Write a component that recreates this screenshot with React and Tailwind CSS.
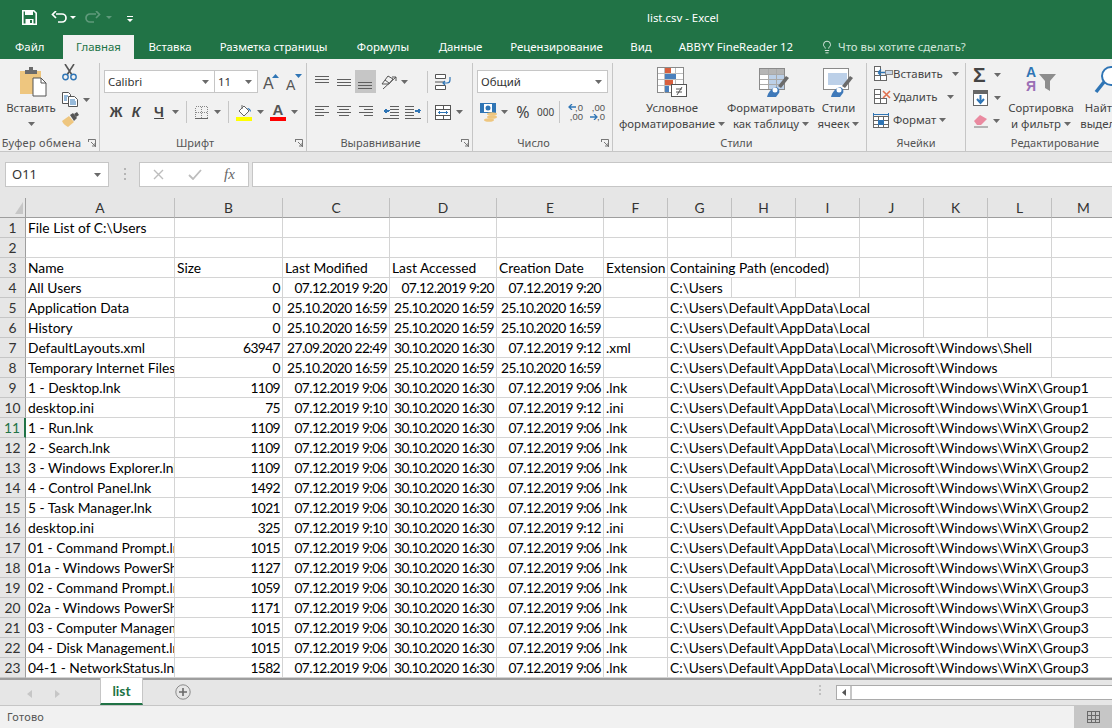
import { Lightbulb } from "lucide-react"

const UI = "[font-family:'Noto_Sans',sans-serif]"
const CELL = "[font-family:Lato,sans-serif]"

const P = "C:\\Users\\Default\\AppData\\Local"
const W = P + "\\Microsoft\\Windows"
const X = W + "\\WinX\\Group"
const cols = ["A", "B", "C", "D", "E", "F", "G", "H", "I", "J", "K", "L", "M"]
const spanClass = { 1: "col-span-1", 3: "col-span-3", 4: "col-span-4", 6: "col-span-6", 7: "col-span-7" }

const m = "07.12.2019 9:06"
const a = "30.10.2020 16:30"
const z = "25.10.2020 16:59"

// name, size, modified, accessed, created, ext, path, how many columns the path runs over
const rows = [
  ["All Users", "0", "07.12.2019 9:20", "07.12.2019 9:20", "07.12.2019 9:20", "", "C:\\Users", 1],
  ["Application Data", "0", z, z, z, "", P, 4],
  ["History", "0", z, z, z, "", P, 4],
  ["DefaultLayouts.xml", "63947", "27.09.2020 22:49", a, "07.12.2019 9:12", ".xml", W + "\\Shell", 6],
  ["Temporary Internet Files", "0", z, z, z, "", W, 6],
  ["1 - Desktop.lnk", "1109", m, a, m, ".lnk", X + "1", 7],
  ["desktop.ini", "75", "07.12.2019 9:10", a, "07.12.2019 9:12", ".ini", X + "1", 7],
  ["1 - Run.lnk", "1109", m, a, m, ".lnk", X + "2", 7],
  ["2 - Search.lnk", "1109", m, a, m, ".lnk", X + "2", 7],
  ["3 - Windows Explorer.lnk", "1109", m, a, m, ".lnk", X + "2", 7],
  ["4 - Control Panel.lnk", "1492", m, a, m, ".lnk", X + "2", 7],
  ["5 - Task Manager.lnk", "1021", m, a, m, ".lnk", X + "2", 7],
  ["desktop.ini", "325", "07.12.2019 9:10", a, "07.12.2019 9:12", ".ini", X + "2", 7],
  ["01 - Command Prompt.lnk", "1015", m, a, m, ".lnk", X + "3", 7],
  ["01a - Windows PowerShell.lnk", "1127", m, a, m, ".lnk", X + "3", 7],
  ["02 - Command Prompt.lnk", "1059", m, a, m, ".lnk", X + "3", 7],
  ["02a - Windows PowerShell.lnk", "1171", m, a, m, ".lnk", X + "3", 7],
  ["03 - Computer Management.lnk", "1015", m, a, m, ".lnk", X + "3", 7],
  ["04 - Disk Management.lnk", "1015", m, a, m, ".lnk", X + "3", 7],
  ["04-1 - NetworkStatus.lnk", "1582", m, a, m, ".lnk", X + "3", 7],
]

const GRID = "grid grid-cols-[26px_149px_108px_107px_107px_107px_64px_64px_64px_64px_64px_64px_64px_64px] w-[1116px]"

const Caret = ({ className = "" }) => (
  <svg width="7" height="4" className={`shrink-0 ${className}`}><path d="M0 0h7L3.5 4z" fill="#6a6a6a" /></svg>
)

const Lines = ({ w = 15, h = 14, items, color = "#5f5f5f" }) => (
  <svg width={w} height={h}>
    {items.map(([x, y, l, c], i) => <rect key={i} x={x} y={y} width={l} height="1" fill={c || color} />)}
  </svg>
)

const Launcher = () => (
  <svg width="8" height="8" className="absolute right-[3px] top-[3px]">
    <path d="M0 .5h7.5V8M.5 0v3M3 3l4 4M4 7h3V4" fill="none" stroke="#777" strokeWidth="1" />
  </svg>
)

const Group = ({ width, label, launcher, children, border = true }) => (
  <div className={`${width} shrink-0 flex flex-col ${border ? "border-r border-[#c6c6c6]" : ""}`}>
    <div className="h-[73px] flex">{children}</div>
    <div className="relative h-[11px] leading-[14px] text-center text-[11px] text-[#555] whitespace-nowrap">
      {label}
      {launcher && <Launcher />}
    </div>
  </div>
)

const Divider = ({ className = "" }) => <div className={`w-px h-[22px] bg-[#c6c6c6] ${className}`} />

const PasteIcon = () => (
  <svg width="29" height="30" className="ml-[4px]">
    <path d="M1 4h21v23H1z" fill="#eec67f" />
    <path d="M6 3h4V0h4v3h4v4H6z" fill="#6b6b6b" />
    <path d="M14 11h8l5 5v13H14z" fill="#fff" stroke="#555" />
    <path d="M22 11v5h5" fill="none" stroke="#555" />
  </svg>
)

const Scissors = () => (
  <svg width="15" height="17">
    <path d="M3 0l7 11M12 0L5 11" stroke="#555" strokeWidth="1.6" fill="none" />
    <circle cx="3.5" cy="13" r="2.7" fill="none" stroke="#2f75b5" strokeWidth="1.4" />
    <circle cx="11.5" cy="13" r="2.7" fill="none" stroke="#2f75b5" strokeWidth="1.4" />
  </svg>
)

const CopyIcon = () => (
  <svg width="16" height="15">
    <path d="M.5.5h6l2 2v9h-8z" fill="#fff" stroke="#555" />
    <path d="M6.5 4.5h6l3 3v7h-9z" fill="#fff" stroke="#555" />
    <path d="M2 4h4M2 6h3M2 8h3M8 8h5M8 10h6M8 12h6" stroke="#2f75b5" />
  </svg>
)

const Brush = () => (
  <svg width="18" height="15">
    <path d="M0 9l7-5 5 6-6 5C4 14 1 12 0 9z" fill="#eec67f" />
    <path d="M8 3l3-2 4 5-3 3z" fill="#555" />
    <path d="M12 2l3-2 2 3-3 2z" fill="#555" />
  </svg>
)

const BigA = ({ small, up }) => (
  <div className="relative w-[16px] h-[20px]">
    <span className={`absolute left-0 bottom-0 leading-none text-[#555] [font-family:'Liberation_Sans',sans-serif] ${small ? "text-[14px]" : "text-[16px]"}`}>A</span>
    <svg width="7" height="4" className="absolute right-0 top-[2px]">
      <path d={up ? "M0 4h7L3.5 0z" : "M0 0h7L3.5 4z"} fill="#2f75b5" />
    </svg>
  </div>
)

const Borders = () => (
  <svg width="13" height="13" shapeRendering="crispEdges">
    <path d="M.5.5h12v12H.5zM6.5.5v12M.5 6.5h12" fill="none" stroke="#888" strokeDasharray="1 1" />
    <path d="M0 12.5h13" stroke="#666" />
  </svg>
)

const FillColor = () => (
  <svg width="17" height="17">
    <path d="M3 7l5-5 5 5-5 5z" fill="#fff" stroke="#666" />
    <path d="M6 5V1" stroke="#666" />
    <path d="M11 4c3 0 4 2 4 4z" fill="#2f75b5" />
    <rect y="13" width="16" height="4" fill="#ffff00" />
  </svg>
)

const FontColor = () => (
  <div className="relative w-[16px] h-[18px] flex flex-col items-center">
    <span className="leading-[14px] text-[15px] text-[#555] [font-family:'Liberation_Sans',sans-serif]">A</span>
    <div className="w-[16px] h-[4px] bg-[#ff0000]" />
  </div>
)

const Orientation = () => (
  <svg width="18" height="16">
    <path d="M1 10l6-8 5 3-4 5zM4 6l4 3" fill="none" stroke="#555" />
    <path d="M2 15L15 3M11 3h4v4" fill="none" stroke="#555" />
  </svg>
)

const Wrap = () => (
  <svg width="16" height="16">
    <path d="M.5.5h10v4H.5zM.5 11.5h10v4H.5z" fill="#fff" stroke="#555" />
    <path d="M0 8h9" stroke="#555" />
    <path d="M15 3v3c0 2-1 3-3 3H8M10 7L8 9l2 2" fill="none" stroke="#2f75b5" strokeWidth="1.2" />
  </svg>
)

const Merge = () => (
  <svg width="16" height="15" shapeRendering="crispEdges">
    <path d="M.5.5h15v14H.5zM.5 4.5h15M.5 10.5h15M8 .5v4M8 10.5v4" fill="#fff" stroke="#555" />
    <path d="M3 7.5h10" stroke="#2f75b5" />
    <path d="M3 7.5l2-2v4zM13 7.5l-2-2v4z" fill="#2f75b5" />
  </svg>
)

const Currency = () => (
  <svg width="18" height="19">
    <rect x=".5" y=".5" width="15" height="9" fill="#fff" stroke="#2f75b5" />
    <path d="M0 0h4v10H0zM12 0h4v10h-4z" fill="#2f75b5" />
    <circle cx="8" cy="5" r="2.5" fill="#2f75b5" />
    <ellipse cx="12" cy="11" rx="5" ry="1.8" fill="#eec67f" />
    <ellipse cx="12" cy="14" rx="5" ry="1.8" fill="#eec67f" />
    <ellipse cx="9" cy="17" rx="5" ry="1.8" fill="#eec67f" />
  </svg>
)

const Decimal = ({ more }) => (
  <div className="relative w-[15px] h-[18px] text-[9.5px] leading-[9px] text-[#555] [font-family:'Liberation_Sans',sans-serif]">
    <div className="text-right">{more ? ",00" : ",0"}</div>
    <div className="text-right">{more ? ",0" : ",00"}</div>
    <svg width="8" height="6" className={`absolute left-0 ${more ? "top-[11px]" : "top-[1px]"}`}>
      <path d={more ? "M0 3h7M4 0l3 3-3 3" : "M8 3H1M4 0L1 3l3 3"} fill="none" stroke="#2f75b5" strokeWidth="1.3" />
    </svg>
  </div>
)

const CondFormat = () => (
  <svg width="30" height="30" shapeRendering="crispEdges" className="mb-[3px]">
    <path d="M.5.5h26v25H.5z" fill="#fff" stroke="#8a8a8a" />
    <path d="M7.5 1v25M18.5 1v25M25 1M1 6.5h25M1 12.5h25M1 18.5h25" stroke="#bdbdbd" />
    <rect x="8" y="1" width="6" height="5" fill="#d8603f" />
    <rect x="8" y="7" width="11" height="5" fill="#4a80bd" />
    <rect x="8" y="13" width="8" height="5" fill="#d8603f" />
    <rect x="8" y="19" width="4" height="6" fill="#4a80bd" />
    <rect x="14.5" y="17.5" width="15" height="12" fill="#fff" stroke="#555" />
    <path d="M19 22h6M19 25h6M25 20l-5 8" fill="none" stroke="#555" shapeRendering="auto" />
  </svg>
)

const TableStyle = ({ cell }) => (
  <svg width="31" height="29" className={`mb-[3px] ${cell ? "" : "ml-[7px]"}`}>
    <g shapeRendering="crispEdges">
      <path d="M.5.5h25v21H.5z" fill="#fff" stroke="#8a8a8a" />
      {cell
        ? <rect x="5" y="5" width="19" height="12" fill="#bcd0e8" />
        : <>
            <rect x="1" y="1" width="24" height="5" fill="#b5b5b5" />
            <rect x="9" y="6" width="16" height="15" fill="#bcd0e8" />
            <path d="M1 6.5h24M1 11.5h24M1 16.5h24M9 1v20M17 1v20" stroke="#a9a9a9" />
          </>}
    </g>
    <path d="M19 18l8-10 3 2-8 10z" fill="#6b6b6b" />
    <path d="M8 29c1-5 5-9 9-10 3 1 4 4 3 6l-3 4z" fill="#3f79b9" />
    <circle cx="16" cy="22" r="2.5" fill="#fff" />
  </svg>
)

const CellIns = ({ type }) => (
  <svg width="20" height="17" shapeRendering="crispEdges">
    <path d="M1.5 1.5h6v5h-6zM1.5 10.5h6v5h-6zM7.5 10.5h6v5h-6z" fill="#fff" stroke="#666" />
    <path d="M1.5 6.5h6v4h-6z" fill="#fff" stroke="#666" />
    {type === "add" && <>
      <rect x="12" y="5" width="7" height="4" fill="#c8d7ea" stroke="#8a8a8a" />
      <path d="M5 7.5h7M5 7.5l3-3M5 7.5l3 3" stroke="#2f75b5" fill="none" shapeRendering="auto" strokeWidth="1.3" />
    </>}
    {type === "del" && <path d="M10 3l7 7M17 3l-7 7" stroke="#e0714f" strokeWidth="1.6" shapeRendering="auto" />}
  </svg>
)

const CellFmt = () => (
  <svg width="16" height="17" shapeRendering="crispEdges">
    <path d="M.5 1.5v3M15.5 1.5v3M1 3h14" stroke="#2f75b5" />
    <path d="M.5 5.5h15v11H.5zM5.5 5.5v11M10.5 5.5v11M.5 9.5h15M.5 13.5h15" fill="#fff" stroke="#666" />
    <rect x="5" y="9" width="6" height="5" fill="#2f75b5" />
  </svg>
)

const FillDown = () => (
  <svg width="15" height="16" shapeRendering="crispEdges">
    <path d="M.5.5h14v15H.5z" fill="#fff" stroke="#666" />
    <rect x="1" y="1" width="13" height="3" fill="#666" />
    <path d="M7.5 5v8M4 9l3.5 4L11 9" fill="none" stroke="#2f75b5" strokeWidth="2" shapeRendering="auto" />
  </svg>
)

const Eraser = () => (
  <svg width="15" height="14">
    <path d="M1 7l6-6 7 4-6 6H4z" fill="#ea8aa0" />
    <path d="M1 13h14" stroke="#777" />
  </svg>
)

const SortIcon = () => (
  <div className="relative w-[30px] h-[27px] mb-[6px]">
    <span className="absolute left-0 top-[-2px] text-[14px] leading-[14px] font-bold text-[#2f75b5] [font-family:'Liberation_Sans',sans-serif]">A</span>
    <span className="absolute left-0 top-[12px] text-[14px] leading-[14px] font-bold text-[#9b6fb5] [font-family:'Liberation_Sans',sans-serif]">Я</span>
    <svg width="17" height="17" className="absolute right-0 top-[7px]">
      <path d="M0 0h17l-6 7v10l-5-3V7z" fill="#8d8d8d" />
    </svg>
  </div>
)

const Find = () => (
  <svg width="26" height="28" className="mb-[6px]">
    <circle cx="17" cy="10" r="9" fill="#fff" stroke="#2f75b5" strokeWidth="2" />
    <path d="M10 16L2 26" stroke="#2f75b5" strokeWidth="3.5" />
  </svg>
)

const Big = ({ icon, top, bottom, width, caret = true }) => (
  <div className={`${width} shrink-0 flex flex-col items-center text-[11.4px] leading-[16px] text-[#444] whitespace-nowrap`}>
    <div className="h-[37px] flex items-end justify-center">{icon}</div>
    <div>{top}</div>
    <div className="flex items-center gap-[3px]">{bottom}{caret && <Caret />}</div>
  </div>
)

const Ribbon = () => (
  <div className={`${UI} h-[93px] bg-[#f1f1f1] border-b border-[#c6c6c6] pt-[4px] flex overflow-hidden`}>
    <Group width="w-[100px]" label={<span className="pr-[16px] tracking-[.3px]">Буфер обмена</span>} launcher>
      <div className="w-[62px] flex flex-col items-center pt-[4px] text-[11.4px] text-[#444]">
        <PasteIcon />
        <div className="mt-[3px] leading-[16px]">Вставить</div>
        <Caret className="mt-[6px]" />
      </div>
      <div className="flex flex-col">
        <div className="h-[25px] pt-[1px]"><Scissors /></div>
        <div className="h-[23px] flex items-center gap-[5px]"><CopyIcon /><Caret /></div>
        <div className="mt-[1px]"><Brush /></div>
      </div>
    </Group>

    <Group width="w-[207px]" label={<span className="pr-[16px]">Шрифт</span>} launcher>
      <div className="flex flex-col pl-[4px]">
        <div className="mt-[7px] h-[23px] flex items-center">
          <div className="w-[111px] h-[23px] bg-white border border-[#c6c6c6] flex items-center justify-between pl-[3px] pr-[5px] text-[11.4px] text-[#333]">Calibri<Caret /></div>
          <div className="w-[44px] h-[23px] -ml-px bg-white border border-[#c6c6c6] flex items-center justify-between pl-[3px] pr-[5px] text-[11.4px] text-[#333]">11<Caret /></div>
          <div className="ml-[5px]"><BigA up /></div>
          <div className="ml-[7px]"><BigA small /></div>
        </div>
        <div className="mt-[7px] h-[24px] flex items-center text-[#444] [font-family:'Liberation_Sans',sans-serif] text-[14px] font-bold">
          <span className="w-[14px] ml-[5px] text-center">Ж</span>
          <span className="w-[10px] ml-[8px] text-center italic">К</span>
          <span className="w-[12px] ml-[12px] text-center underline">Ч</span>
          <Caret className="ml-[7px]" />
          <Divider className="ml-[7px]" />
          <div className="ml-[8px]"><Borders /></div>
          <Caret className="ml-[6px]" />
          <Divider className="ml-[7px]" />
          <div className="ml-[7px]"><FillColor /></div>
          <Caret className="ml-[4px]" />
          <div className="ml-[6px]"><FontColor /></div>
          <Caret className="ml-[5px]" />
        </div>
      </div>
    </Group>

    <Group width="w-[166px]" label={<span className="pr-[18px]">Выравнивание</span>} launcher>
      <div className="flex flex-col pl-[8px]">
        <div className="mt-[7px] h-[23px] flex items-center">
          <Lines items={[[0, 1, 14], [0, 4, 14], [0, 7, 14]]} />
          <div className="ml-[7px]"><Lines items={[[0, 4, 14], [0, 7, 14], [0, 10, 14]]} /></div>
          <div className="ml-[3px] w-[21px] h-[23px] bg-[#c6c6c6] flex items-center justify-center">
            <Lines items={[[0, 7, 14], [0, 10, 14], [0, 13, 14]]} />
          </div>
          <div className="ml-[5px]"><Orientation /></div>
          <Caret className="ml-[2px]" />
          <Divider className="ml-[19px]" />
          <div className="ml-[7px]"><Wrap /></div>
        </div>
        <div className="mt-[7px] h-[24px] flex items-center">
          <Lines items={[[0, 1, 14], [0, 4, 9], [0, 7, 14], [0, 10, 9]]} />
          <div className="ml-[7px]"><Lines items={[[0, 1, 14], [2, 4, 10], [0, 7, 14], [2, 10, 10]]} /></div>
          <div className="ml-[7px]"><Lines items={[[0, 1, 14], [5, 4, 9], [0, 7, 14], [5, 10, 9]]} /></div>
          <div className="ml-[9px]"><Lines w={16} items={[[7, 1, 9], [7, 4, 9], [7, 7, 9], [7, 10, 9], [1, 5, 6, "#2f75b5"], [1, 6, 5, "#2f75b5"], [2, 4, 2, "#2f75b5"], [2, 7, 2, "#2f75b5"], [0, 13, 16]]} /></div>
          <div className="ml-[6px]"><Lines w={16} items={[[0, 1, 9], [0, 4, 9], [0, 7, 9], [0, 10, 9], [10, 5, 6, "#2f75b5"], [10, 6, 5, "#2f75b5"], [13, 4, 2, "#2f75b5"], [13, 7, 2, "#2f75b5"], [0, 13, 16]]} /></div>
          <Divider className="ml-[6px]" />
          <div className="ml-[7px]"><Merge /></div>
          <Caret className="ml-[5px]" />
        </div>
      </div>
    </Group>

    <Group width="w-[140px]" label={<span className="pr-[18px]">Число</span>} launcher>
      <div className="flex flex-col pl-[4px]">
        <div className="mt-[7px] w-[131px] h-[23px] bg-white border border-[#c6c6c6] flex items-center justify-between pl-[3px] pr-[5px] text-[11.4px] text-[#333]">Общий<Caret /></div>
        <div className="mt-[7px] h-[24px] flex items-center text-[#444]">
          <div className="ml-[3px]"><Currency /></div>
          <Caret className="ml-[3px]" />
          <span className="ml-[8px] w-[14px] text-[16px] leading-none text-center">%</span>
          <span className="ml-[7px] w-[15px] text-[10px] leading-none text-center">000</span>
          <Divider className="ml-[7px]" />
          <div className="ml-[8px]"><Decimal /></div>
          <div className="ml-[7px]"><Decimal more /></div>
        </div>
      </div>
    </Group>

    <Group width="w-[254px]" label={<span className="pr-[6px]">Стили</span>}>
      <Big width="w-[118px]" icon={<CondFormat />} top="Условное" bottom="форматирование" />
      <Big width="w-[80px]" icon={<TableStyle />} top="Форматировать" bottom="как таблицу" />
      <Big width="w-[55px]" icon={<TableStyle cell />} top="Стили" bottom="ячеек" />
    </Group>

    <Group width="w-[99px]" label="Ячейки">
      <div className="flex flex-col pl-[6px] -mt-[1px] text-[11.4px] text-[#444] whitespace-nowrap">
        <div className="h-[23px] flex items-center"><CellIns type="add" /><span>Вставить</span><Caret className="ml-[9px]" /></div>
        <div className="h-[23px] flex items-center"><CellIns type="del" /><span>Удалить</span><Caret className="ml-[10px]" /></div>
        <div className="h-[23px] flex items-center"><CellFmt /><span className="ml-[4px]">Формат</span><Caret className="ml-[3px]" /></div>
      </div>
    </Group>

    <Group width="w-[190px]" border={false} label={<span className="block w-[170px] pl-[8px]">Редактирование</span>}>
      <div className="flex flex-col pl-[7px] w-[40px] shrink-0">
        <div className="h-[23px] flex items-center gap-[5px]">
          <span className="w-[16px] text-[#444] text-[21px] leading-none font-bold [font-family:'Liberation_Sans',sans-serif]">Σ</span>
          <Caret />
        </div>
        <div className="h-[23px] flex items-center gap-[6px]"><FillDown /><Caret /></div>
        <div className="h-[23px] flex items-center gap-[5px]"><Eraser /><Caret /></div>
      </div>
      <Big width="w-[70px]" icon={<SortIcon />} top="Сортировка" bottom="и фильтр" />
      <div className="ml-[1px]">
        <Big width="w-[60px]" icon={<Find />} top="Найти и" bottom="выделить" caret={false} />
      </div>
    </Group>
  </div>
)

const tabs = [
  ["w-[72px]", "Вставка"],
  ["w-[135px]", "Разметка страницы"],
  ["w-[84px]", "Формулы"],
  ["w-[71px]", "Данные"],
  ["w-[121px]", "Рецензирование"],
  ["w-[48px]", "Вид"],
  ["w-[142px]", "ABBYY FineReader 12"],
]

const TitleBar = () => (
  <div className={`${UI} bg-[#217346] text-white`}>
    <div className="h-[35px] flex items-center relative">
      <svg width="15" height="15" className="ml-[22px]">
        <path d="M.8.8h11l2.4 2.4v11H.8z" fill="none" stroke="#fff" strokeWidth="1.6" />
        <path d="M3 1h8v4H3zM3.5 9h8v5h-8z" fill="#fff" />
        <rect x="8" y="10" width="2" height="3" fill="#217346" />
      </svg>
      <svg width="16" height="14" className="ml-[14px]">
        <path d="M5 3h6a4 4 0 010 8H7M5 0L1.5 3.5 5 7" fill="none" stroke="#fff" strokeWidth="1.7" />
      </svg>
      <svg width="6" height="3" className="ml-[3px]"><path d="M0 0h6L3 3z" fill="#fff" /></svg>
      <svg width="16" height="14" className="ml-[9px]">
        <path d="M11 3H5a4 4 0 000 8h4M11 0l3.5 3.5L11 7" fill="none" stroke="#5f9a7b" strokeWidth="1.7" />
      </svg>
      <svg width="6" height="3" className="ml-[5px]"><path d="M0 0h6L3 3z" fill="#5f9a7b" /></svg>
      <svg width="6" height="6" className="ml-[15px] mt-[2px]"><path d="M0 0h6v1H0zM0 3h6L3 6z" fill="#fff" /></svg>
      <div className="ml-[514px] text-[11.4px]">list.csv - Excel</div>
    </div>
    <div className="h-[24px] flex items-center text-[11.4px] whitespace-nowrap">
      <div className="w-[63px] pl-[15px]">Файл</div>
      <div className="w-[71px] h-[24px] bg-[#f1f1f1] text-[#217346] flex items-center justify-center">Главная</div>
      {tabs.map(([w, t]) => <div key={t} className={`${w} text-center`}>{t}</div>)}
      <Lightbulb size={14} strokeWidth={1.4} className="ml-[13px]" />
      <div className="ml-[4px] text-[#d3e6db]">Что вы хотите сделать?</div>
    </div>
  </div>
)

const FormulaBar = () => (
  <div className="h-[46px] bg-[#e6e6e6] flex items-start pt-[10px]">
    <div className={`${UI} ml-[5px] w-[104px] h-[25px] bg-white border border-[#c6c6c6] flex items-center justify-between pl-[6px] pr-[7px] text-[13px] text-[#333]`}>O11<Caret /></div>
    <div className="ml-[15px] mt-[6px] w-[2px] flex flex-col gap-[3px]">
      <div className="h-[2px] bg-[#b5b5b5]" /><div className="h-[2px] bg-[#b5b5b5]" /><div className="h-[2px] bg-[#b5b5b5]" />
    </div>
    <div className="ml-[13px] w-[110px] h-[25px] bg-white border border-[#c6c6c6] flex items-center">
      <svg width="11" height="11" className="ml-[13px]"><path d="M1 1l9 9M10 1l-9 9" stroke="#bdbdbd" strokeWidth="1.4" /></svg>
      <svg width="14" height="11" className="ml-[24px]"><path d="M1 6l4 4 8-9" fill="none" stroke="#bdbdbd" strokeWidth="1.8" /></svg>
      <span className="ml-[22px] italic text-[15px] text-[#666] [font-family:'Liberation_Serif',serif]">fx</span>
    </div>
    <div className="ml-[3px] flex-1 h-[25px] bg-white border-y border-l border-[#c6c6c6]" />
  </div>
)

const Cell = ({ children, right, span = "" }) => (
  <div className={`${span} h-[20px] border-r border-b border-[#d4d4d4] overflow-hidden whitespace-nowrap leading-[20px] ${right ? "text-right pr-[2px] tracking-[-.6px]" : "pl-[2px]"}`}>{children}</div>
)

const Head = ({ children, className = "" }) => (
  <div className={`h-[20px] bg-[#e6e6e6] border-b border-[#c6c6c6] border-r-[#9e9e9e] border-r text-center leading-[20px] text-[#333] ${className}`}>{children}</div>
)

const Sheet = () => {
  const blank = Array.from({ length: 13 })
  return (
    <div className={`${CELL} h-[480px] overflow-hidden text-[13.8px] text-black bg-white`}>
      <div className={GRID}>
        <div className="h-[20px] bg-[#e6e6e6] border-r border-b border-[#9e9e9e] relative">
          <svg width="8" height="12" className="absolute left-[15px] top-[4px]"><path d="M8 0v12H0z" fill="#c6c6c6" /></svg>
        </div>
        {cols.map(c => (
          <div key={c} className="h-[20px] bg-[#e6e6e6] border-r border-b border-r-[#c0c0c0] border-b-[#9e9e9e] text-center leading-[19px] text-[#333]">{c}</div>
        ))}

        <Head>1</Head>
        <Cell>{"File List of C:\\Users"}</Cell>
        {blank.slice(1).map((_, i) => <Cell key={i} />)}

        <Head>2</Head>
        {blank.map((_, i) => <Cell key={i} />)}

        <Head>3</Head>
        <Cell>Name</Cell>
        <Cell>Size</Cell>
        <Cell>Last Modified</Cell>
        <Cell>Last Accessed</Cell>
        <Cell>Creation Date</Cell>
        <Cell>Extension</Cell>
        <Cell span="col-span-3">Containing Path (encoded)</Cell>
        <Cell /><Cell /><Cell /><Cell />

        {rows.map((r, i) => {
          const selected = i + 4 === 11
          return [
            <Head key="h" className={selected ? "bg-[#d2d2d2] text-[#217346] border-r-2 border-r-[#217346]" : ""}>{i + 4}</Head>,
            <Cell key="a">{r[0]}</Cell>,
            <Cell key="b" right>{r[1]}</Cell>,
            <Cell key="c" right>{r[2]}</Cell>,
            <Cell key="d" right>{r[3]}</Cell>,
            <Cell key="e" right>{r[4]}</Cell>,
            <Cell key="f">{r[5]}</Cell>,
            <Cell key="g" span={spanClass[r[7]]}>{r[6]}</Cell>,
            ...Array.from({ length: 7 - r[7] }).map((_, k) => <Cell key={"x" + k} />),
          ].map((el, n) => <div key={i + "-" + n} className="contents">{el}</div>)
        })}
      </div>
    </div>
  )
}

const SheetTabs = () => (
  <div className="h-[28px] bg-[#e6e6e6] border-t-2 border-[#9e9e9e] border-b border-b-[#c6c6c6] flex">
    <svg width="5" height="8" className="ml-[27px] mt-[10px]"><path d="M5 0v8L0 4z" fill="#c6c6c6" /></svg>
    <svg width="5" height="8" className="ml-[23px] mt-[10px]"><path d="M0 0v8l5-4z" fill="#c6c6c6" /></svg>
    <div className={`${CELL} ml-[40px] -mt-[2px] w-[43px] h-[27px] bg-white border-x border-[#c6c6c6] border-b-2 border-b-[#217346] text-center text-[#217346] font-bold text-[13.8px] leading-[26px]`}>list</div>
    <svg width="16" height="16" className="ml-[32px] mt-[4px]">
      <circle cx="8" cy="8" r="7.2" fill="none" stroke="#8a8a8a" />
      <path d="M8 4v8M4 8h8" stroke="#6a6a6a" strokeWidth="1.6" />
    </svg>
    <div className="ml-[628px] mt-[5px] w-[2px] flex flex-col gap-[2px]">
      <div className="h-[2px] bg-[#c0c0c0]" /><div className="h-[2px] bg-[#c0c0c0]" /><div className="h-[2px] bg-[#c0c0c0]" />
    </div>
    <div className="ml-[15px] mt-[5px] flex-1 h-[15px] bg-white border-y border-l border-[#ababab] flex">
      <div className="w-[15px] border-r-2 border-[#c6c6c6] flex items-center justify-center">
        <svg width="4" height="7"><path d="M4 0v7L0 3.5z" fill="#555" /></svg>
      </div>
    </div>
  </div>
)

const StatusBar = () => (
  <div className={`${UI} flex-1 bg-[#f1f1f1] flex items-center justify-between text-[11px] text-[#555]`}>
    <span className="ml-[7px] tracking-[.2px]">Готово</span>
    <div className="w-[38px] h-full bg-[#c6c6c6] flex items-center justify-center">
      <svg width="13" height="12" shapeRendering="crispEdges">
        <path d="M.5.5h12v11H.5zM4.5.5v11M8.5.5v11M.5 4.5h12M.5 8.5h12" fill="none" stroke="#6a6a6a" />
      </svg>
    </div>
  </div>
)

export default function App() {
  return (
    <div className="w-[1112px] h-[728px] overflow-hidden flex flex-col bg-white">
      <TitleBar />
      <Ribbon />
      <FormulaBar />
      <Sheet />
      <SheetTabs />
      <StatusBar />
    </div>
  )
}
